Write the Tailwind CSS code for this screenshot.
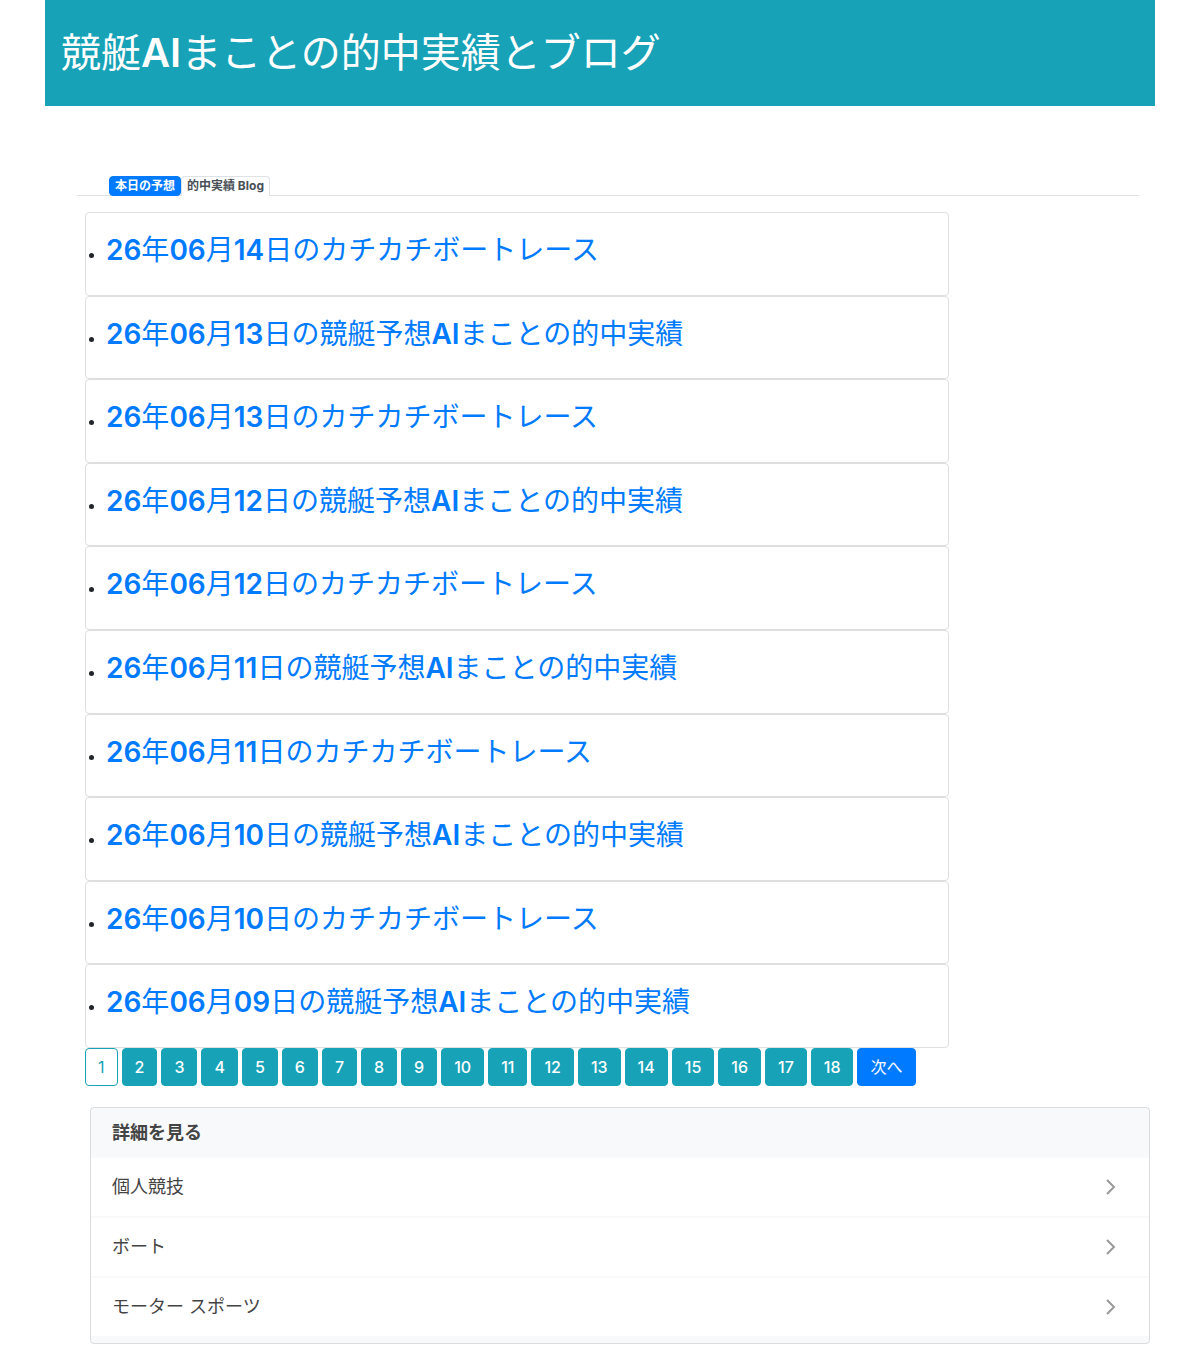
<!DOCTYPE html>
<html lang="ja">
<head>
    <meta charset="UTF-8">
    <meta name="viewport" content="width=device-width, initial-scale=1.0">
    <title>競艇AIまことの的中実績とブログ</title>
    <script src="https://cdn.jsdelivr.net/npm/@tailwindcss/browser@4"></script>
</head>
<body class="bg-white font-[Inter,'Noto_Sans_CJK_JP',sans-serif] text-[#212529]">
    <div class="mx-auto w-full max-w-[1110px]">
        <header class="bg-[#17a2b8] px-4 py-7">
            <h1 class="text-[40px] leading-[50px] text-white">競艇<span class="font-semibold">AI</span>まことの的中実績とブログ</h1>
        </header>
        <main class="pt-[70px]">
            <nav class="mr-4 ml-8 flex h-5 border-b border-[#dee2e6] pl-8 text-xs leading-[18px] font-bold">
                <a href="#" class="h-5 rounded border border-[#007bff] bg-[#007bff] px-[5px] text-white">本日の予想</a>
                <a href="#" class="h-5 rounded-t border border-b-0 border-[#dee2e6] bg-white px-[5px] text-[#495057]">的中実績 Blog</a>
            </nav>

            <section class="mt-4 ml-10 max-w-[864px]">
                <div class="rounded border border-[#dfdfdf] p-5">
                    <ul class="list-disc">
                        <li><h3 class="mb-[7px] pt-px text-[28px] leading-[1.2] text-[#007bff]"><a href="#"><span class="font-semibold">26</span>年<span class="font-semibold">06</span>月<span class="font-semibold">14</span>日のカチカチボートレース</a></h3></li>
                    </ul>
                </div>
                <div class="rounded border border-[#dfdfdf] p-5">
                    <ul class="list-disc">
                        <li><h3 class="mb-[7px] pt-px text-[28px] leading-[1.2] text-[#007bff]"><a href="#"><span class="font-semibold">26</span>年<span class="font-semibold">06</span>月<span class="font-semibold">13</span>日の競艇予想<span class="font-semibold">AI</span>まことの的中実績</a></h3></li>
                    </ul>
                </div>
                <div class="rounded border border-[#dfdfdf] p-5">
                    <ul class="list-disc">
                        <li><h3 class="mb-[7px] pt-px text-[28px] leading-[1.2] text-[#007bff]"><a href="#"><span class="font-semibold">26</span>年<span class="font-semibold">06</span>月<span class="font-semibold">13</span>日のカチカチボートレース</a></h3></li>
                    </ul>
                </div>
                <div class="rounded border border-[#dfdfdf] p-5">
                    <ul class="list-disc">
                        <li><h3 class="mb-[7px] pt-px text-[28px] leading-[1.2] text-[#007bff]"><a href="#"><span class="font-semibold">26</span>年<span class="font-semibold">06</span>月<span class="font-semibold">12</span>日の競艇予想<span class="font-semibold">AI</span>まことの的中実績</a></h3></li>
                    </ul>
                </div>
                <div class="rounded border border-[#dfdfdf] p-5">
                    <ul class="list-disc">
                        <li><h3 class="mb-[7px] pt-px text-[28px] leading-[1.2] text-[#007bff]"><a href="#"><span class="font-semibold">26</span>年<span class="font-semibold">06</span>月<span class="font-semibold">12</span>日のカチカチボートレース</a></h3></li>
                    </ul>
                </div>
                <div class="rounded border border-[#dfdfdf] p-5">
                    <ul class="list-disc">
                        <li><h3 class="mb-[7px] pt-px text-[28px] leading-[1.2] text-[#007bff]"><a href="#"><span class="font-semibold">26</span>年<span class="font-semibold">06</span>月<span class="font-semibold">11</span>日の競艇予想<span class="font-semibold">AI</span>まことの的中実績</a></h3></li>
                    </ul>
                </div>
                <div class="rounded border border-[#dfdfdf] p-5">
                    <ul class="list-disc">
                        <li><h3 class="mb-[7px] pt-px text-[28px] leading-[1.2] text-[#007bff]"><a href="#"><span class="font-semibold">26</span>年<span class="font-semibold">06</span>月<span class="font-semibold">11</span>日のカチカチボートレース</a></h3></li>
                    </ul>
                </div>
                <div class="rounded border border-[#dfdfdf] p-5">
                    <ul class="list-disc">
                        <li><h3 class="mb-[7px] pt-px text-[28px] leading-[1.2] text-[#007bff]"><a href="#"><span class="font-semibold">26</span>年<span class="font-semibold">06</span>月<span class="font-semibold">10</span>日の競艇予想<span class="font-semibold">AI</span>まことの的中実績</a></h3></li>
                    </ul>
                </div>
                <div class="rounded border border-[#dfdfdf] p-5">
                    <ul class="list-disc">
                        <li><h3 class="mb-[7px] pt-px text-[28px] leading-[1.2] text-[#007bff]"><a href="#"><span class="font-semibold">26</span>年<span class="font-semibold">06</span>月<span class="font-semibold">10</span>日のカチカチボートレース</a></h3></li>
                    </ul>
                </div>
                <div class="rounded border border-[#dfdfdf] p-5">
                    <ul class="list-disc">
                        <li><h3 class="mb-[7px] pt-px text-[28px] leading-[1.2] text-[#007bff]"><a href="#"><span class="font-semibold">26</span>年<span class="font-semibold">06</span>月<span class="font-semibold">09</span>日の競艇予想<span class="font-semibold">AI</span>まことの的中実績</a></h3></li>
                    </ul>
                </div>
            </section>

            <nav class="ml-10 flex flex-wrap gap-1 text-base leading-6 text-white">
                <a href="#" class="rounded border border-[#17a2b8] bg-white px-3 py-[6px] text-[#17a2b8]">1</a>
                <a href="#" class="rounded border border-[#17a2b8] bg-[#17a2b8] px-3 py-[6px] font-medium">2</a>
                <a href="#" class="rounded border border-[#17a2b8] bg-[#17a2b8] px-3 py-[6px] font-medium">3</a>
                <a href="#" class="rounded border border-[#17a2b8] bg-[#17a2b8] px-3 py-[6px] font-medium">4</a>
                <a href="#" class="rounded border border-[#17a2b8] bg-[#17a2b8] px-3 py-[6px] font-medium">5</a>
                <a href="#" class="rounded border border-[#17a2b8] bg-[#17a2b8] px-3 py-[6px] font-medium">6</a>
                <a href="#" class="rounded border border-[#17a2b8] bg-[#17a2b8] px-3 py-[6px] font-medium">7</a>
                <a href="#" class="rounded border border-[#17a2b8] bg-[#17a2b8] px-3 py-[6px] font-medium">8</a>
                <a href="#" class="rounded border border-[#17a2b8] bg-[#17a2b8] px-3 py-[6px] font-medium">9</a>
                <a href="#" class="rounded border border-[#17a2b8] bg-[#17a2b8] px-3 py-[6px] font-medium">10</a>
                <a href="#" class="rounded border border-[#17a2b8] bg-[#17a2b8] px-3 py-[6px] font-medium">11</a>
                <a href="#" class="rounded border border-[#17a2b8] bg-[#17a2b8] px-3 py-[6px] font-medium">12</a>
                <a href="#" class="rounded border border-[#17a2b8] bg-[#17a2b8] px-3 py-[6px] font-medium">13</a>
                <a href="#" class="rounded border border-[#17a2b8] bg-[#17a2b8] px-3 py-[6px] font-medium">14</a>
                <a href="#" class="rounded border border-[#17a2b8] bg-[#17a2b8] px-3 py-[6px] font-medium">15</a>
                <a href="#" class="rounded border border-[#17a2b8] bg-[#17a2b8] px-3 py-[6px] font-medium">16</a>
                <a href="#" class="rounded border border-[#17a2b8] bg-[#17a2b8] px-3 py-[6px] font-medium">17</a>
                <a href="#" class="rounded border border-[#17a2b8] bg-[#17a2b8] px-3 py-[6px] font-medium">18</a>
                <a href="#" class="rounded border border-[#007bff] bg-[#007bff] px-3 py-[6px]">次へ</a>
            </nav>

            <section class="mt-[21px] mr-[5px] mb-4 ml-[45px] overflow-hidden rounded border border-[#dadce0] bg-[#f8f9fb] pb-[5px] text-lg text-[#444]">
                <h2 class="flex h-[50px] items-center px-[21px] font-bold">詳細を見る</h2>
                <a href="#" class="flex h-[60px] items-center justify-between border-b-2 border-[#f8f9fb] bg-white pr-[33px] pl-[21px]">
                    個人競技
                    <svg class="h-4 w-[10px]" viewBox="0 0 10 16" fill="none" stroke="#999" stroke-width="2"><path d="M1 1l7 7-7 7"/></svg>
                </a>
                <a href="#" class="flex h-[60px] items-center justify-between border-b-2 border-[#f8f9fb] bg-white pr-[33px] pl-[21px]">
                    ボート
                    <svg class="h-4 w-[10px]" viewBox="0 0 10 16" fill="none" stroke="#999" stroke-width="2"><path d="M1 1l7 7-7 7"/></svg>
                </a>
                <a href="#" class="flex h-[60px] items-center justify-between border-b-2 border-[#f8f9fb] bg-white pr-[33px] pl-[21px]">
                    モーター スポーツ
                    <svg class="h-4 w-[10px]" viewBox="0 0 10 16" fill="none" stroke="#999" stroke-width="2"><path d="M1 1l7 7-7 7"/></svg>
                </a>
            </section>
        </main>
    </div>
</body>
</html>
